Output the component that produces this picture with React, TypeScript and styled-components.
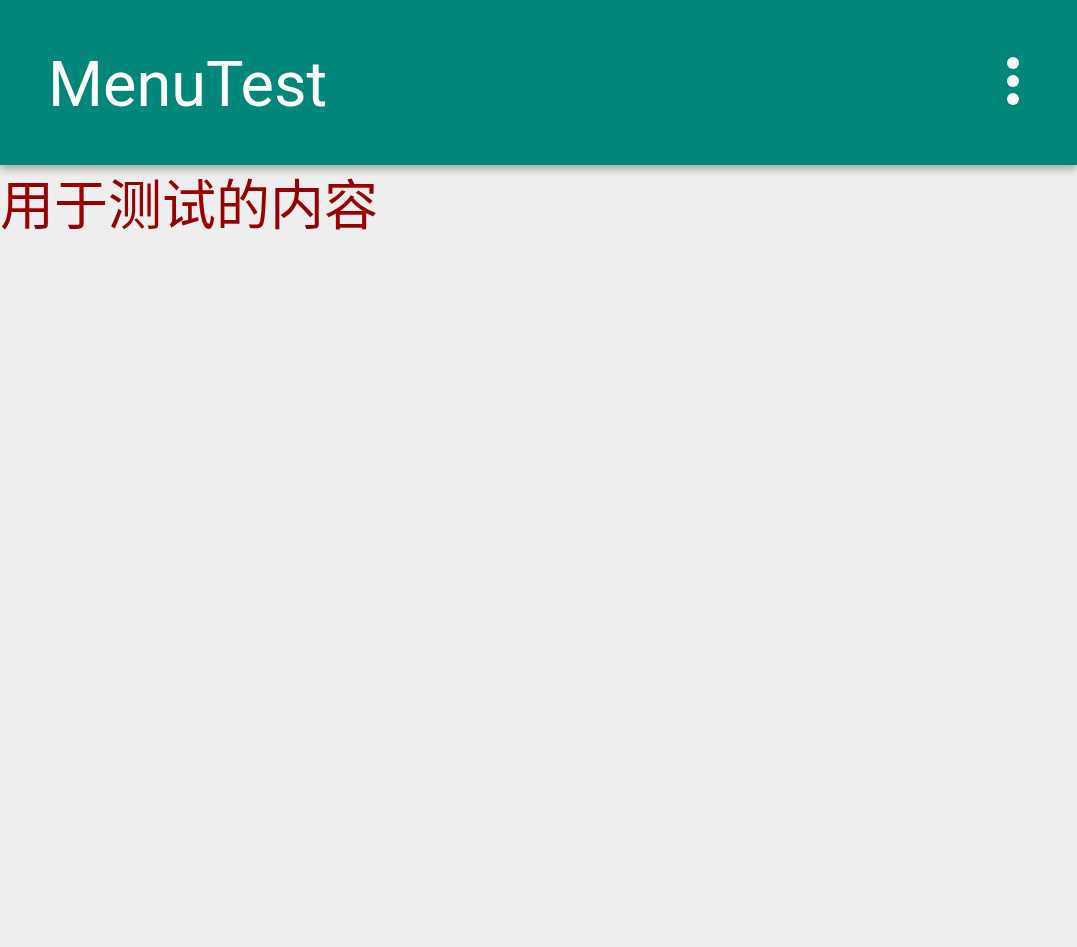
import React from "react";
import styled, { createGlobalStyle } from "styled-components";

const Global = createGlobalStyle`
  html, body { margin: 0; padding: 0; background: #eeeeee; }
  body { font-family: Roboto, "Noto Sans", sans-serif; }
`;

const Screen = styled.div`
  width: 1077px;
  height: 947px;
  background: #eeeeee;
  display: flex;
  flex-direction: column;
  overflow: hidden;
`;

const Toolbar = styled.header`
  height: 165px;
  flex: none;
  background: #00877a;
  display: flex;
  align-items: center;
  padding: 0 58px 0 48px;
  box-shadow: 0 4px 8px rgba(0, 0, 0, 0.3);
  position: relative;
  z-index: 1;
`;

const Title = styled.h1`
  margin: 4px 0 0 0;
  flex: 1;
  font-family: Roboto, sans-serif;
  font-weight: 400;
  font-size: 63px;
  color: #ffffff;
  letter-spacing: 0;
`;

const Overflow = styled.button`
  border: 0;
  background: transparent;
  padding: 0;
  display: flex;
  flex-direction: column;
  gap: 6px;
  margin-top: -3px;
`;

const Dot = styled.span`
  width: 12px;
  height: 12px;
  border-radius: 50%;
  background: #ffffff;
`;

const Content = styled.p`
  margin: 0;
  font-family: "Noto Sans CJK SC", sans-serif;
  font-size: 54px;
  line-height: 74px;
  color: #990000;
`;

export default function App() {
  return (
    <Screen>
      <Global />
      <Toolbar>
        <Title>MenuTest</Title>
        <Overflow aria-label="More options">
          <Dot />
          <Dot />
          <Dot />
        </Overflow>
      </Toolbar>
      <Content>用于测试的内容</Content>
    </Screen>
  );
}
